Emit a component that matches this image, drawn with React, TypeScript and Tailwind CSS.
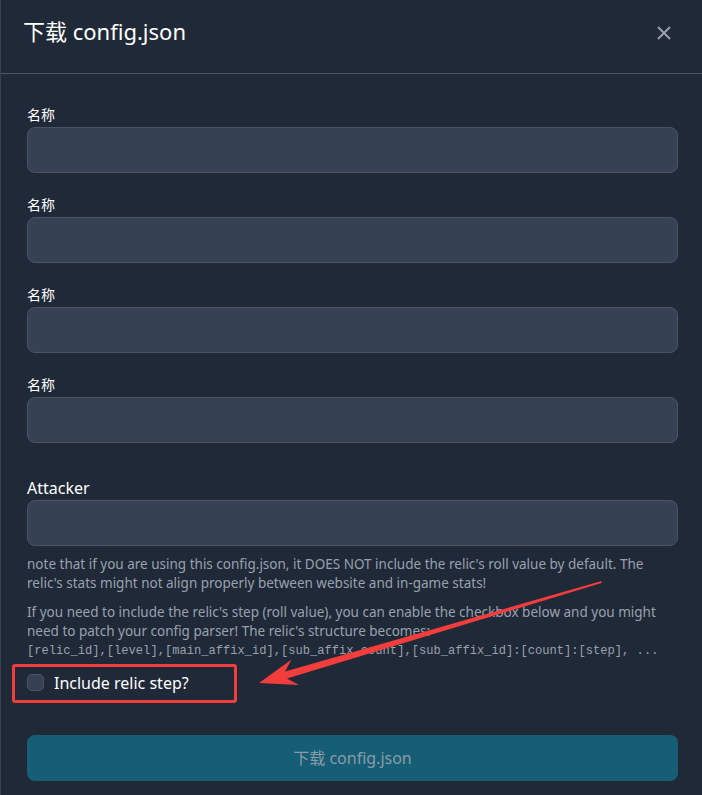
import React, { useState } from "react";

const sans = { fontFamily: '"Noto Sans", "Noto Sans CJK SC", sans-serif' };

const Field: React.FC<{ label: string }> = ({ label }) => (
  <div>
    <label className="block text-sm leading-5 text-white mb-[2px]">{label}</label>
    <input className="block w-full h-[46px] rounded-lg border border-gray-600 bg-gray-700 px-3 text-white outline-none" />
  </div>
);

const App: React.FC = () => {
  const [step, setStep] = useState(false);

  return (
    <div
      className="relative min-h-[795px] w-[702px] overflow-hidden bg-[#1f2937] border-l border-gray-700"
      style={sans}
    >
      <div className="flex items-start justify-between h-[74px] pl-[22px] pr-[30px] pt-[16px] border-b border-gray-600">
        <h3 className="text-[22px] leading-[30px] text-white">下载 config.json</h3>
        <button className="mt-[9px] text-gray-400" aria-label="close">
          <svg width="16" height="16" viewBox="0 0 16 16" fill="none" stroke="currentColor" strokeWidth="2">
            <path d="M2 2l12 12M14 2L2 14" />
          </svg>
        </button>
      </div>

      <div className="pl-[26px] pr-[24px] pt-[31px] pb-4">
        <div className="flex flex-col gap-[22px]">
          <Field label="名称" />
          <Field label="名称" />
          <Field label="名称" />
          <Field label="名称" />
        </div>

        <div className="mt-[33px]">
          <label className="block text-base leading-6 text-white">Attacker</label>
          <input className="block w-full h-[46px] rounded-lg border border-gray-600 bg-gray-700 px-3 text-white outline-none" />
        </div>

        <p className="mt-[9px] text-[13.5px] leading-[18.5px] text-gray-400">
          note that if you are using this config.json, it DOES NOT include the relic's roll value by default. The
          relic's stats might not align properly between website and in-game stats!
        </p>
        <p className="mt-[11px] text-[13.5px] leading-[18.5px] text-gray-400">
          If you need to include the relic's step (roll value), you can enable the checkbox below and you might
          need to patch your config parser! The relic's structure becomes:
          <br />
          <code className="text-[12.1px]" style={{ fontFamily: '"Liberation Mono", monospace' }}>
            [relic_id],[level],[main_affix_id],[sub_affix_count],[sub_affix_id]:[count]:[step], ...
          </code>
        </p>

        <label className="mt-[10px] flex items-center gap-[10px] cursor-pointer">
          <input
            type="checkbox"
            checked={step}
            onChange={() => setStep(!step)}
            className="appearance-none w-[17px] h-[17px] rounded-[5px] border border-gray-600 bg-gray-700"
          />
          <span className="text-base text-white">Include relic step?</span>
        </label>

        <button
          disabled
          className="mt-[40px] w-full h-[46px] rounded-lg bg-[#155e75] text-base text-[#8a9ba8]"
        >
          下载 config.json
        </button>
      </div>

      <div className="absolute left-[11px] top-[664px] w-[225px] h-[39px] border-[3px] border-[#f23d3d] rounded-[3px] pointer-events-none" />
      <svg className="absolute left-0 top-0 pointer-events-none" width="702" height="795">
        <polygon
          fill="#f23d3d"
          points="600.5,581 284,671.5 290.5,659.5 258,683 298,685 286,678.5 600.5,583"
        />
      </svg>
    </div>
  );
};

export default App;
